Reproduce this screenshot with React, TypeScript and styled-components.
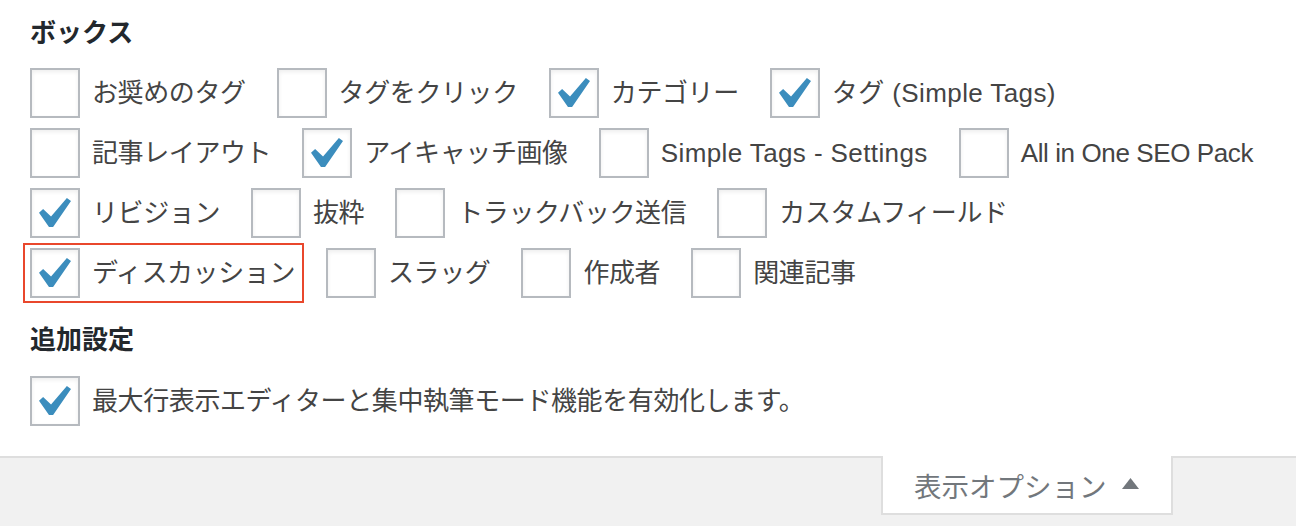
import React from "react";
import styled, { createGlobalStyle } from "styled-components";

const GlobalStyle = createGlobalStyle`
  html, body { margin: 0; padding: 0; }
  body {
    background: #f1f1f1;
    font-family: "Liberation Sans", "Noto Sans CJK JP", sans-serif;
    color: #444;
  }
`;

const Page = styled.div`
  width: 1296px;
  height: 526px;
  overflow: hidden;
  background: #f1f1f1;
`;

const Panel = styled.div`
  background: #fff;
  border-bottom: 2px solid #dedede;
  padding: 13px 30px 30px 30px;
  display: flex;
  flex-direction: column;
`;

const Heading = styled.h5<{ $top?: number }>`
  margin: ${(p) => p.$top ?? 0}px 0 0 0;
  font-size: 26px;
  line-height: 36px;
  height: 36px;
  font-weight: 700;
  color: #23282d;
  font-family: "Noto Sans CJK JP", sans-serif;
`;

const Rows = styled.div<{ $top: number }>`
  margin-top: ${(p) => p.$top}px;
  display: flex;
  flex-direction: column;
  gap: 10px;
`;

const Row = styled.div`
  display: flex;
  align-items: center;
  height: 50px;
  column-gap: 31px;
`;

const Item = styled.label<{ $highlighted?: boolean; $latin?: boolean }>`
  position: relative;
  display: flex;
  align-items: center;
  gap: 12px;
  font-size: 26px;
  line-height: 50px;
  letter-spacing: ${(p) => (p.$latin ? "0.4px" : "-0.4px")};
  color: #444;
  white-space: nowrap;
  &::after {
    content: "";
    display: ${(p) => (p.$highlighted ? "block" : "none")};
    position: absolute;
    left: -7px;
    top: -5px;
    right: -9px;
    bottom: -5px;
    border: 2px solid #e9472c;
  }
`;

const Box = styled.span`
  position: relative;
  box-sizing: border-box;
  width: 50px;
  height: 50px;
  flex: 0 0 50px;
  border: 2px solid #b6babf;
  background: #fff;
  box-shadow: inset 0 2px 4px rgba(0, 0, 0, 0.07);
`;

const Check = styled.svg`
  position: absolute;
  left: 7px;
  top: 8px;
  width: 32px;
  height: 29px;
`;

const Footer = styled.div`
  display: flex;
  justify-content: flex-end;
  padding-right: 123px;
`;

const Tab = styled.button`
  margin-top: -2px;
  width: 292px;
  height: 59px;
  box-sizing: border-box;
  background: #fff;
  border: 2px solid #dedede;
  border-top: none;
  display: flex;
  align-items: center;
  padding: 0 0 0 31px;
  gap: 15px;
  font-family: "Noto Sans CJK JP", sans-serif;
  font-size: 27.5px;
  color: #72777c;
  cursor: pointer;
`;

const Arrow = styled.svg`
  width: 17px;
  height: 11px;
  margin-top: -2px;
`;

type Opt = { label: string; checked?: boolean; highlighted?: boolean; latin?: boolean };

const rows: Opt[][] = [
  [
    { label: "お奨めのタグ" },
    { label: "タグをクリック" },
    { label: "カテゴリー", checked: true },
    { label: "タグ (Simple Tags)", checked: true, latin: true },
  ],
  [
    { label: "記事レイアウト" },
    { label: "アイキャッチ画像", checked: true },
    { label: "Simple Tags - Settings", latin: true },
    { label: "All in One SEO Pack" },
  ],
  [
    { label: "リビジョン", checked: true },
    { label: "抜粋" },
    { label: "トラックバック送信" },
    { label: "カスタムフィールド" },
  ],
  [
    { label: "ディスカッション", checked: true, highlighted: true },
    { label: "スラッグ" },
    { label: "作成者" },
    { label: "関連記事" },
  ],
];

function CheckBox({ checked }: { checked?: boolean }) {
  return (
    <Box>
      {checked && (
        <Check viewBox="5.78 4.89 10.39 9.32" preserveAspectRatio="none">
          <path
            d="M14.83 4.89l1.34.94-5.81 8.38H9.02L5.78 9.67l1.34-1.25 2.57 2.4z"
            fill="#3b8dbd"
          />
        </Check>
      )}
    </Box>
  );
}

export default function App() {
  return (
    <Page>
      <GlobalStyle />
      <Panel>
        <Heading>ボックス</Heading>
        <Rows $top={19}>
          {rows.map((r, i) => (
            <Row key={i}>
              {r.map((o) => (
                <Item key={o.label} $highlighted={o.highlighted} $latin={o.latin}>
                  <CheckBox checked={o.checked} />
                  {o.label}
                </Item>
              ))}
            </Row>
          ))}
        </Rows>
        <Heading $top={22}>追加設定</Heading>
        <Rows $top={20}>
          <Row>
            <Item>
              <CheckBox checked />
              最大行表示エディターと集中執筆モード機能を有効化します。
            </Item>
          </Row>
        </Rows>
      </Panel>
      <Footer>
        <Tab>
          表示オプション
          <Arrow viewBox="0 0 17 11">
            <polygon points="8.5,0 17,11 0,11" fill="#72777c" />
          </Arrow>
        </Tab>
      </Footer>
    </Page>
  );
}
